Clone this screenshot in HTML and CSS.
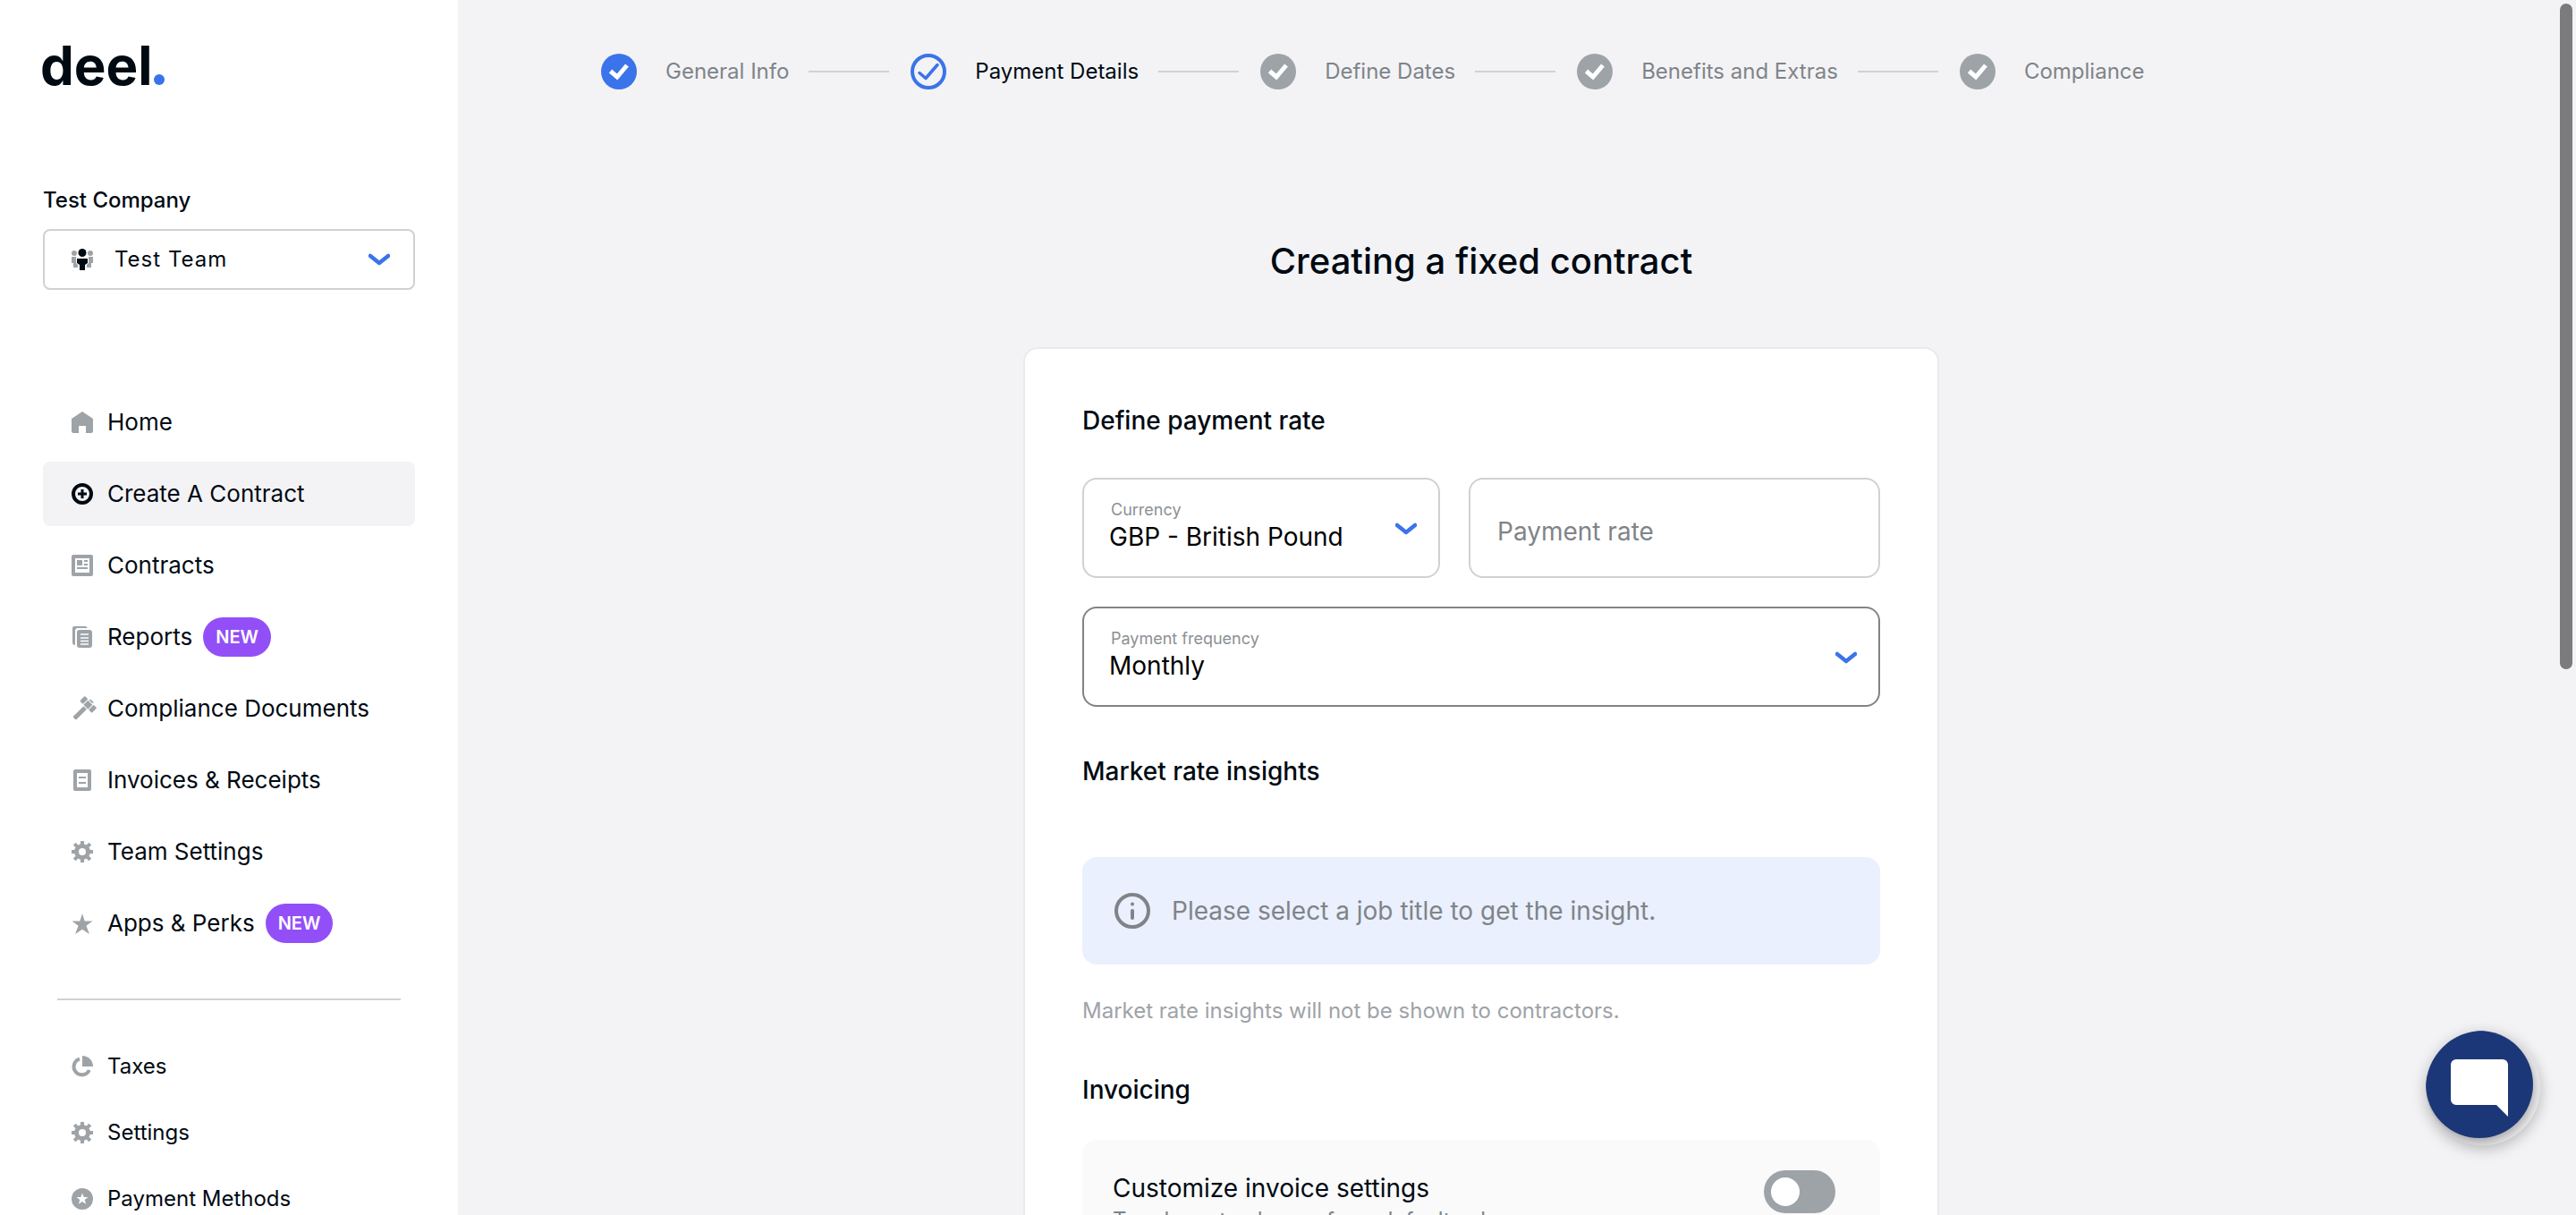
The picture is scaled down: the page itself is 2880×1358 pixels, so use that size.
FILE: index.html
```html
<!DOCTYPE html>
<html lang="en">
<head>
<meta charset="utf-8">
<meta name="viewport" content="width=device-width, initial-scale=1">
<title>Deel - Creating a fixed contract</title>
<link rel="stylesheet" href="styles.css">
</head>
<body>
<svg class="sprite" aria-hidden="true">
  <symbol id="chevron" viewBox="0 0 24 14"><path d="M2 3l10 8 10-8" fill="none" stroke="currentColor" stroke-width="4.500" stroke-linecap="round" stroke-linejoin="round"/></symbol>
  <symbol id="home" viewBox="0 0 24 24"><path fill="currentColor" d="M12 0l12 8v14a2 2 0 0 1-2 2h-6v-8H8v8H2a2 2 0 0 1-2-2V8z"/></symbol>
  <symbol id="gear" viewBox="0 0 24 24"><g fill="none" stroke="currentColor"><circle cx="12" cy="12" r="6.5" stroke-width="5"/><path stroke-width="4" d="M12 0v5M12 19v5M0 12h5M19 12h5"/><path stroke-width="4" d="M3.2 3.2l3 3M17.800 17.800l3 3M20.800 3.200l-3 3M6.200 17.800l-3 3"/></g></symbol>
  <symbol id="tick" viewBox="0 0 40 40"><circle cx="20" cy="20" r="20" fill="currentColor"/><path d="M10.500 19.500l7.500 6.500 11-13" fill="none" stroke="#fff" stroke-width="5"/></symbol>
  <symbol id="tick-current" viewBox="0 0 40 40"><g fill="none" stroke="currentColor" stroke-width="4"><circle cx="20" cy="20" r="18"/><path d="M10 21.500l7 6 13-15" stroke-width="3.500" stroke-linecap="round" stroke-linejoin="round"/></g></symbol>
</svg>
<div class="app">
  <aside class="sidebar">
    <a class="logo" href="#" aria-label="deel home">
      <svg class="logo-art" viewBox="0 0 144 56"><text class="logo-text" x="-3" y="47">deel</text><circle cx="130" cy="41" r="6" fill="#3b73ea"/></svg>
    </a>
    <label class="company" for="team">Test Company</label>
    <div class="team">
      <svg class="icon" viewBox="0 0 24 24"><g fill="#9ea3a8"><circle cx="3" cy="5" r="3"/><circle cx="21" cy="5" r="3"/><path d="M0 9h5v7l2 2v3H2v-5H0zM24 9h-5v7l-2 2v3h5v-5h2z"/></g><g fill="#000a12"><circle cx="12" cy="4.500" r="4.500"/><path d="M6 11h12v5l-3 2v6H9v-6l-3-2z"/></g></svg>
      <select class="team-select" id="team"><option>Test Team</option></select>
      <svg class="chevron"><use href="#chevron"/></svg>
    </div>
    <nav class="nav" aria-label="Main">
      <a class="nav-item" href="#"><svg class="icon"><use href="#home"/></svg>Home</a>
      <a class="nav-item nav-item-active" href="#" aria-current="page"><svg class="icon" viewBox="0 0 24 24"><circle cx="12" cy="12" r="10" fill="none" stroke="currentColor" stroke-width="4"/><path d="M12 7v10M7 12h10" stroke="currentColor" stroke-width="3"/></svg>Create A Contract</a>
      <a class="nav-item" href="#"><svg class="icon" viewBox="0 0 24 24"><path fill="currentColor" fill-rule="evenodd" d="M2 0h20a2 2 0 0 1 2 2v20a2 2 0 0 1-2 2H2a2 2 0 0 1-2-2V2a2 2 0 0 1 2-2zM4 4v16h16V4z"/><path fill="currentColor" d="M6 6h6v6H6zM14 6h4v2h-4zM14 10h4v2h-4zM6 14h12v2H6z"/></svg>Contracts</a>
      <a class="nav-item" href="#"><svg class="icon" viewBox="0 0 24 24"><path fill="currentColor" d="M3 0h13l2 2H7a3 3 0 0 0-3 3v16a3 3 0 0 1-3-3V2a2 2 0 0 1 2-2z"/><rect x="6" y="4" width="17" height="20" rx="3" fill="currentColor"/><path d="M10 9h9M10 13h9M10 16.500h9M10 20h9" stroke="#fff" stroke-width="1.300"/></svg>Reports<span class="badge">NEW</span></a>
      <a class="nav-item" href="#"><svg class="icon" viewBox="0 0 24 24"><g fill="currentColor" transform="rotate(45 12 12)"><rect x="4" y="0" width="5" height="8" rx="1"/><rect x="10" y="1" width="7" height="7"/><rect x="18" y="0" width="5" height="8" rx="1"/><rect x="11" y="-2" width="5" height="2"/><rect x="11" y="9" width="5" height="17" rx="1"/></g></svg>Compliance Documents</a>
      <a class="nav-item" href="#"><svg class="icon" viewBox="0 0 24 24"><path fill="currentColor" fill-rule="evenodd" d="M4 0h16a2 2 0 0 1 2 2v20a2 2 0 0 1-2 2H4a2 2 0 0 1-2-2V2a2 2 0 0 1 2-2zM6 4v16h12V4z"/><path fill="currentColor" d="M8 8h8v2H8zM8 14h8v2H8z"/></svg>Invoices &amp; Receipts</a>
      <a class="nav-item" href="#"><svg class="icon"><use href="#gear"/></svg>Team Settings</a>
      <a class="nav-item" href="#"><svg class="icon" viewBox="0 0 24 24"><path fill="currentColor" d="M12 1l2.700 8.600H23.500l-7.100 5.200L20 24l-8-5.300L4 24l3.600-9.200L.5 9.600h8.800z"/></svg>Apps &amp; Perks<span class="badge">NEW</span></a>
    </nav>
    <hr class="divider">
    <nav class="nav-secondary" aria-label="Account">
      <a class="nav-item nav-item-small" href="#"><svg class="icon" viewBox="0 0 24 24"><path fill="currentColor" d="M12 0a12 12 0 0 1 12 12H12z"/><path d="M9 3.700A9 9 0 1 0 19.800 16" fill="none" stroke="currentColor" stroke-width="4"/></svg>Taxes</a>
      <a class="nav-item nav-item-small" href="#"><svg class="icon"><use href="#gear"/></svg>Settings</a>
      <a class="nav-item nav-item-small" href="#"><svg class="icon" viewBox="0 0 24 24"><circle cx="12" cy="12" r="12" fill="currentColor"/><path fill="#fff" d="M12 5.500l1.700 4.500h4.800l-3.800 2.900 1.400 4.900-4.100-2.900-4.100 2.900 1.400-4.900L5.500 10h4.800z"/></svg>Payment Methods</a>
    </nav>
  </aside>

  <main class="main">
    <ol class="steps">
      <li class="step step-done"><svg class="step-icon"><use href="#tick"/></svg>General Info</li>
      <li class="step step-current" aria-current="step"><svg class="step-icon"><use href="#tick-current"/></svg>Payment Details</li>
      <li class="step"><svg class="step-icon"><use href="#tick"/></svg>Define Dates</li>
      <li class="step"><svg class="step-icon"><use href="#tick"/></svg>Benefits and Extras</li>
      <li class="step"><svg class="step-icon"><use href="#tick"/></svg>Compliance</li>
    </ol>
    <h1 class="title">Creating a fixed contract</h1>
    <form class="card">
      <h2 class="section-title">Define payment rate</h2>
      <div class="rate-row">
        <div class="field">
          <label class="field-label" for="currency">Currency</label>
          <select class="field-select" id="currency"><option>GBP - British Pound</option></select>
          <svg class="chevron field-chevron"><use href="#chevron"/></svg>
        </div>
        <input class="field-input" type="text" placeholder="Payment rate" aria-label="Payment rate">
      </div>
      <div class="field field-active">
        <label class="field-label" for="frequency">Payment frequency</label>
        <select class="field-select" id="frequency"><option>Monthly</option></select>
        <svg class="chevron field-chevron"><use href="#chevron"/></svg>
      </div>
      <h2 class="section-title section-title-market">Market rate insights</h2>
      <div class="notice">
        <svg class="notice-icon" viewBox="0 0 40 40"><circle cx="20" cy="20" r="18" fill="none" stroke="currentColor" stroke-width="4"/><circle cx="20" cy="12.500" r="2" fill="currentColor"/><path d="M20 20v8" stroke="currentColor" stroke-width="4" stroke-linecap="round"/></svg>
        Please select a job title to get the insight.
      </div>
      <p class="note">Market rate insights will not be shown to contractors.</p>
      <h2 class="section-title">Invoicing</h2>
      <div class="setting">
        <div class="setting-text">
          <label class="setting-title" for="customize">Customize invoice settings</label>
          <span class="setting-hint">Toggle on to change from default values</span>
        </div>
        <input class="toggle" type="checkbox" role="switch" id="customize">
      </div>
    </form>
  </main>
</div>
<div class="scroll-thumb"></div>
<div class="chat">
  <button class="chat-button" type="button" aria-label="Open chat"><svg class="chat-icon" viewBox="0 0 64 64"><path fill="#fff" d="M6 0h52a6 6 0 0 1 6 6v58L51 51H6a6 6 0 0 1-6-6V6a6 6 0 0 1 6-6z"/></svg></button>
</div>
</body>
</html>
```

FILE: styles.css
```css
* { box-sizing: border-box; }

body {
  margin: 0;
  background: #f3f3f6;
  color: #000a12;
  font-family: Inter, "Liberation Sans", sans-serif;
  font-size: 24px;
  line-height: 32px;
  font-optical-sizing: none;
}

h1, h2, p { margin: 0; font-weight: 500; }

select, input, button {
  margin: 0;
  padding: 0;
  border: 0;
  background: none;
  color: inherit;
  font: inherit;
  appearance: none;
}

.sprite { display: none; }

.app {
  display: flex;
  height: 100vh;
  overflow: hidden;
}

/* Sidebar */

.sidebar {
  flex: 0 0 512px;
  padding: 48px;
  background: #fff;
}

.logo { display: block; height: 56px; }
.logo-art { display: block; width: 144px; height: 56px; overflow: visible; }
.logo-text { font-size: 60px; font-weight: 700; font-optical-sizing: auto; fill: #000a12; }

.company { display: block; margin: 104px 0 16px; font-weight: 500; }

.team {
  display: flex;
  align-items: center;
  height: 68px;
  padding: 0 26px 0 30px;
  border: 2px solid #d0d1d2;
  border-radius: 8px;
}

.team-select { flex: 1; margin-left: 24px; letter-spacing: 1px; }

.icon { flex: none; width: 24px; height: 24px; overflow: visible; }
.chevron { flex: none; width: 24px; height: 14px; color: #3b73ea; }

.nav { display: grid; gap: 8px; margin-top: 112px; }

.nav-item {
  display: flex;
  align-items: center;
  height: 72px;
  padding: 0 32px;
  border-radius: 8px;
  color: #000a12;
  font-size: 26px;
  text-decoration: none;
  white-space: nowrap;
}

.nav-item .icon { margin-right: 16px; color: #9ea3a8; }
.nav-item-active { background: #f3f3f6; }
.nav-item-active .icon { color: #000a12; }

.badge {
  margin-left: 12px;
  padding: 0 14px;
  border-radius: 22px;
  background: #924ff7;
  color: #fff;
  font-size: 20px;
  font-weight: 600;
  line-height: 44px;
}

.divider {
  height: 2px;
  margin: 48px 16px 38px;
  border: 0;
  background: #d0d1d2;
}

.nav-secondary { display: grid; gap: 2px; }
.nav-item-small { font-size: 24px; }

/* Main column */

.main { flex: 1; padding: 56px 240px 0 160px; }

.steps {
  display: flex;
  align-items: center;
  gap: 24px;
  margin: 0;
  padding: 0;
  list-style: none;
  white-space: nowrap;
}

.step { display: flex; align-items: center; height: 48px; color: #7f8488; }
.step:not(:last-child)::after { content: ""; width: 90px; height: 2px; margin-left: 22px; background: #d0d1d2; }
.step-icon { width: 40px; height: 40px; margin-right: 32px; color: #9ea3a8; }
.step-done .step-icon, .step-current .step-icon { color: #3b73ea; }
.step-current { color: #000a12; }

.title {
  margin: 160px 0 68px;
  font-size: 40px;
  line-height: 56px;
  text-align: center;
}

.card {
  max-width: 1024px;
  margin: 0 auto;
  padding: 60px 64px;
  border: 2px solid #e9e9ef;
  border-radius: 16px;
  background: #fff;
}

.section-title { font-size: 28px; line-height: 40px; }

.rate-row {
  display: grid;
  grid-template-columns: 400fr 460fr;
  gap: 32px;
  margin: 44px 0 32px;
}

.field {
  display: grid;
  grid-template-columns: 1fr auto;
  align-content: center;
  height: 112px;
  padding: 0 24px 4px 28px;
  border: 2px solid #d0d1d2;
  border-radius: 16px;
}

.field-active { border-color: #7f8488; }
.field-label { padding-left: 2px; color: #8c9094; font-size: 18px; line-height: 24px; }
.field-select { grid-row: 2; height: 36px; color: #000; font-size: 28px; line-height: 36px; }
.field-chevron { grid-area: 1 / 2 / 3; align-self: center; margin-top: 6px; }

.field-input {
  width: 100%;
  height: 112px;
  padding: 8px 30px 0;
  border: 2px solid #d0d1d2;
  border-radius: 16px;
  font-size: 28px;
}

.field-input::placeholder { color: #7f8488; opacity: 1; }

.section-title-market { margin: 52px 0 76px; }

.notice {
  display: flex;
  align-items: center;
  gap: 24px;
  height: 120px;
  padding: 0 36px;
  border-radius: 16px;
  background: #eaf0fd;
  color: #7f8488;
  font-size: 28px;
}

.notice-icon { width: 40px; height: 40px; }

.note { margin: 36px 0 52px; color: #9ea3a8; font-weight: 400; }

.setting {
  display: flex;
  align-items: flex-start;
  justify-content: space-between;
  margin-top: 36px;
  padding: 34px 50px 34px 34px;
  border-radius: 16px;
  background: #fafafa;
}

.setting-text { display: grid; }
.setting-title { font-size: 28px; line-height: 40px; }
.setting-hint { color: #7f8488; }

.toggle {
  width: 80px;
  height: 48px;
  padding: 8px;
  border-radius: 24px;
  background: #9ea3a8;
}

.toggle::before {
  content: "";
  display: block;
  width: 32px;
  height: 32px;
  border-radius: 50%;
  background: #fff;
}

.toggle:checked { background: #3b73ea; }
.toggle:checked::before { margin-left: auto; }

/* Overlays */

.scroll-thumb {
  position: fixed;
  top: 4px;
  right: 4px;
  width: 14px;
  height: calc(55% - 3px);
  border-radius: 7px;
  background: #7b7b7d;
}

.chat {
  position: fixed;
  right: 40px;
  bottom: 78px;
  width: 128px;
  height: 128px;
  border-radius: 50%;
  background: #f3f3f6;
  box-shadow: 0 4px 16px rgba(0, 0, 0, .25);
  overflow: hidden;
}

.chat-button {
  display: grid;
  place-items: center;
  width: 120px;
  height: 120px;
  padding-top: 8px;
  border-radius: 50%;
  background: #1c3777;
  box-shadow: 0 4px 16px rgba(0, 0, 0, .4);
}

.chat-icon { width: 64px; height: 64px; }
```
